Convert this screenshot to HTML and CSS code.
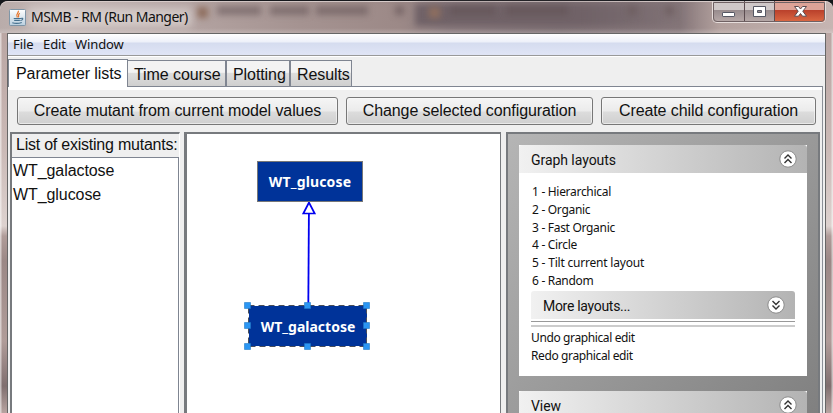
FILE: index.html
```html
<!DOCTYPE html>
<html lang="en">
<head>
<meta charset="utf-8">
<title>MSMB - RM (Run Manger)</title>
<link rel="stylesheet" href="styles.css">
</head>
<body>
<div class="window">
  <header class="titlebar">
    <div class="ghost" aria-hidden="true">
      <i class="ghost-tab"></i>
      <i class="ghost-icon g1"></i><i class="ghost-text g2"></i><i class="ghost-text g2b"></i><i class="ghost-text g2c"></i><i class="ghost-x g3"></i>
      <i class="ghost-icon g4"></i><i class="ghost-text g5"></i><i class="ghost-text g5b"></i><i class="ghost-x g6"></i><i class="ghost-x g7"></i>
      <i class="glow"></i>
    </div>
    <svg class="java" viewBox="0 0 18 18" width="17" height="17">
      <defs><linearGradient id="jg" x2="0" y2="1"><stop offset="0" stop-color="#fff"/><stop offset="1" stop-color="#b9cfdf"/></linearGradient></defs>
      <rect x=".5" y=".5" width="17" height="17" rx="1" fill="url(#jg)" stroke="#7891a4"/>
      <path d="M9.800 1.800C11 4.200 6.300 5 8.800 9M11.500 4.500C8.500 6 11.200 6.800 9.800 8.800" fill="none" stroke="#e8762c" stroke-width="1.300"/>
      <path d="M5 10h7.500M5.500 12h6M3.500 14.500q5 1.500 10-.3M12.500 10q2.500-.6 2 .7t-2.500 1.500" fill="none" stroke="#47718f" stroke-width="1.200"/>
    </svg>
    <h1 class="title">MSMB - RM (Run Manger)</h1>
    <div class="controls">
      <span class="control"><svg width="31" height="20" viewBox="0 0 31 20"><rect x="9.500" y="10.500" width="12" height="4" rx=".6" fill="#fff" stroke="#555763"/></svg></span>
      <span class="control"><svg width="29" height="20" viewBox="0 0 29 20"><path d="M8.500 4.500h12v10h-12zM12.500 8.500h4v2h-4z" fill="#fff" fill-rule="evenodd" stroke="#555763"/></svg></span>
      <span class="control close"><svg width="50" height="20" viewBox="0 0 50 20"><path d="M19.500 4.500h4l2 2.500 2-2.500h4l-3.700 4.700 3.700 5h-4l-2-2.700-2 2.700h-4l3.700-5z" fill="#fff" stroke="#5b4b50"/></svg></span>
    </div>
  </header>
  <main class="client">
    <nav class="menubar"><span class="m1">File</span><span class="m2">Edit</span><span class="m3">Window</span></nav>
    <div class="tabs">
      <span class="tab active">Parameter lists</span><span class="tab tc">Time course</span><span class="tab tp">Plotting</span><span class="tab tr">Results</span>
    </div>
    <div class="page">
      <div class="buttons">
        <button class="btn b1">Create mutant from current model values</button>
        <button class="btn b2">Change selected configuration</button>
        <button class="btn b3">Create child configuration</button>
      </div>
      <div class="panes">
        <section class="mutants">
          <h2>List of existing mutants:</h2>
          <ul><li>WT_galactose</li><li>WT_glucose</li></ul>
        </section>
        <section class="canvas">
          <svg class="edge" width="20" height="106" viewBox="0 0 20 106"><path d="M10.900 13L10.300 106" stroke="#0000f0" stroke-width="1.800"/><path d="M11 1.500L5.300 12.500H16.700Z" fill="#fff" stroke="#0000f0" stroke-width="1.700"/></svg>
          <div class="node glucose"><span>WT_glucose</span></div>
          <div class="node galactose"><span>WT_galactose</span>
            <svg class="selection" width="127" height="49" viewBox="0 0 127 49">
              <rect x="4.500" y="3.500" width="118" height="41" fill="none" stroke="#4a4e58" stroke-dasharray="6 4"/>
              <g fill="#2b96f3" stroke="#217ac6" stroke-width=".6"><path d="M.5.500h6v6h-6zM60.500.500h6v6h-6zM119.500.500h6v6h-6zM.5 20.500h6v6h-6zM119.500 20.500h6v6h-6zM.5 41.500h6v6h-6zM60.500 41.500h6v6h-6zM119.500 41.500h6v6h-6z"/></g>
            </svg>
          </div>
        </section>
        <aside class="sidebar">
          <section class="card">
            <h3 class="head">Graph layouts
              <svg width="18" height="18" viewBox="0 0 18 18"><circle cx="9" cy="9" r="8.200" fill="#fff" stroke="#8b8b8b"/><path d="M5.500 8.500L9 5l3.500 3.500M5.500 13L9 9.500l3.500 3.500" fill="none" stroke="#333" stroke-width="1.400"/></svg></h3>
            <ul class="links"><li>1 - Hierarchical</li><li>2 - Organic</li><li>3 - Fast Organic</li><li>4 - Circle</li><li class="tilt">5 - Tilt current layout</li><li>6 - Random</li></ul>
            <h3 class="head more">More layouts...
              <svg width="18" height="18" viewBox="0 0 18 18"><circle cx="9" cy="9" r="8.200" fill="#fff" stroke="#8b8b8b"/><path d="M5.500 5L9 8.500 12.500 5M5.500 9.500L9 13l3.500-3.500" fill="none" stroke="#333" stroke-width="1.400"/></svg></h3>
            <hr class="rule">
            <ul class="links edits"><li>Undo graphical edit</li><li>Redo graphical edit</li></ul>
          </section>
          <section class="card view">
            <h3 class="head">View
              <svg width="18" height="18" viewBox="0 0 18 18"><circle cx="9" cy="9" r="8.200" fill="#fff" stroke="#8b8b8b"/><path d="M5.500 8.500L9 5l3.500 3.500M5.500 13L9 9.500l3.500 3.500" fill="none" stroke="#333" stroke-width="1.400"/></svg></h3>
          </section>
        </aside>
      </div>
    </div>
  </main>
</div>
</body>
</html>
```
FILE: styles.css
```css
* { box-sizing: border-box; margin: 0; padding: 0; }
body { width: 833px; height: 413px; overflow: hidden; background: #15171b; color: #111; font: 16px "Liberation Sans", Arial, sans-serif; }
svg { display: block; flex: none; }
ul { list-style: none; }
h1, h2, h3 { font-weight: normal; }
.window { position: relative; width: 833px; height: 413px; padding: 0 8px; border-top: 1px solid #15171b; border-radius: 8px 8px 0 0; background: linear-gradient(90deg, #fff8 0 1px, transparent 2px 831px, #fff8 832px), linear-gradient(#b6a29f 0, #c2afac 90px, #cbbab7 150px, #ddd2cf 225px, #b09c99 235px, #9b8886 260px, #b09c99 340px, #806f6f 385px, #b9a5a2 413px); }
.titlebar { position: relative; display: flex; height: 32px; margin: 0 -8px; padding: 6px 0 0 9px; border-top: 1px solid #d7cbc9; border-radius: 8px 8px 0 0; background: linear-gradient(#0000 26px, #fff3), linear-gradient(90deg, #b9acaa 0, #c4b8b6 60px, #b3a3a1 190px, #a59391 300px, #9c8987 400px, #8b7b7e 450px, #7e7074 560px, #86777a 680px, #b3a19e 720px, #c6b5b2 833px); }
.java { position: relative; margin-top: 1px; }
.title { position: relative; margin-left: 5px; font: 14px/18px "Noto Sans", sans-serif; letter-spacing: -.54px; white-space: nowrap; }
.ghost i { position: absolute; filter: blur(3px); }
.ghost .glow { left: 28px; top: 6px; width: 164px; height: 19px; background: #e6dfdd99; filter: blur(5px); }
.ghost-icon { top: 5px; width: 11px; height: 11px; background: #8f6f5f; }
.ghost-text { top: 4px; height: 9px; background: #5f505388; }
.ghost-x { top: 4px; width: 9px; height: 9px; background: #6c5c5dbb; }
.ghost .ghost-tab { left: 415px; top: 2px; width: 280px; height: 22px; background: linear-gradient(90deg, #706267, #706267 60%, #70626700); }
.g1 { left: 197px; } .g2 { left: 217px; width: 44px; } .g2b { left: 270px; width: 39px; } .g2c { left: 316px; width: 52px; } .g3 { left: 395px; }
.g4 { left: 429px; } .g5 { left: 450px; width: 45px; } .g5b { left: 506px; width: 62px; } .g6 { left: 628px; } .g7 { left: 665px; }
.controls { position: absolute; right: 7px; top: -1px; display: flex; height: 22px; border: 1px solid #e6dddb; border-top: 0; border-radius: 0 0 5px 5px; overflow: hidden; outline: 1px solid #6f6163; outline-offset: -2px; }
.control { padding-top: 1px; background: linear-gradient(#cfc8c8 0 9px, #978b8d 9px, #b8aaa9); border-right: 1px solid #5b4c50; }
.close { background: linear-gradient(#dda397 0 9px, #b9402b 9px, #dc6a44); border-right: 0; }
.client { position: relative; width: 819px; height: 380px; margin-left: -1px; border: 1px solid #666; border-bottom: 0; background: #efefef; }
.menubar { display: flex; height: 22px; padding: 0 0 0 5px; background: linear-gradient(#fff 0, #edf0f9 8px, #d5dcef 9px, #dfe4f5 20px); border-bottom: 1px solid #999; font: 13px/20px "Noto Sans", sans-serif; letter-spacing: -.1px; }
.m1 { width: 30px; } .m2 { width: 32px; }
.tabs { display: flex; align-items: flex-end; height: 30px; padding-top: 2px; border-top: 1px solid #fff; }
.tab { height: 26px; border: 1px solid #7f8591; border-bottom: 0; background: linear-gradient(#f3f3f3 0 45%, #ddd 50%, #cfcfcf); line-height: 27px; white-space: nowrap; padding-left: 6px; letter-spacing: -.08px; }
.active { position: relative; width: 120px; height: 28px; margin-bottom: -1px; padding-left: 7px; background: #fff; line-height: 28px; }
.tc { width: 98px; border-left: 0; } .tp { width: 64px; } .tr { width: 62px; }
.page { width: 815px; height: 327px; border-top: 1px solid #7f8591; border-right: 1px solid #8b9097; box-shadow: inset 0 3px #fff; padding-top: 10px; }
.buttons { display: flex; gap: 8px; padding-left: 9px; height: 28px; }
.btn { height: 28px; font: inherit; letter-spacing: -.09px; color: #111; border: 1px solid #777; border-radius: 3px; background: linear-gradient(#f5f5f5 0, #ebebeb 13px, #dcdcdc 14px, #cfcfcf); box-shadow: inset 0 0 0 1px #fafafa99; white-space: nowrap; }
.b1 { width: 321px; } .b2 { width: 247px; } .b3 { width: 215px; }
.panes { display: flex; margin-top: 7px; height: 281px; padding-left: 2px; overflow: hidden; }
.mutants { width: 170px; border: 2px solid #777a7e; border-right: 1px solid #fff; border-bottom: 0; }
.mutants h2 { height: 24px; padding-left: 4px; font-size: 16px; line-height: 21px; letter-spacing: -.23px; border-bottom: 1px solid #7f8591; white-space: nowrap; }
.mutants ul { height: 255px; background: #fff; border-right: 1px solid #7f8591; padding: 1px 0 0 1px; line-height: 23.500px; letter-spacing: -.08px; }
.canvas { position: relative; width: 317px; margin-left: 4px; border: 3px solid #777a7e; border-width: 2px 1px 0 3px; background: #fff; }
.node { position: absolute; display: flex; align-items: center; justify-content: center; background: #003399; color: #fff; font: bold 14px "Noto Sans", sans-serif; }
.glucose { left: 70px; top: 27px; width: 106px; height: 41px; border: 1px solid #777; letter-spacing: .15px; }
.galactose { left: 62px; top: 172px; width: 118px; height: 40px; }
.selection { position: absolute; left: -5px; top: -4px; }
.edge { position: absolute; left: 111px; top: 67px; }
.sidebar { flex: 1; margin-left: 5px; margin-right: 2px; padding: 11px 11px 0; border: 2px solid #777a7e; border-bottom: 0; background: linear-gradient(135deg, #b5b5b5, #808080); }
.card { height: 231px; background: #fff; }
.head { display: flex; justify-content: space-between; height: 28px; padding: 5px 10px 0 12px; border-radius: 3px 3px 0 0; background: linear-gradient(90deg, #f1f1f1, #b3b3b3); font: 14px/20px Roboto, sans-serif; letter-spacing: -.05px; }
.links { padding: 10px 0 0 13px; font: 12px/17.800px "Noto Sans", sans-serif; white-space: nowrap; letter-spacing: -.3px; }
.tilt { letter-spacing: -.2px; }
.more { margin: 1px 12px 0; letter-spacing: -.3px; }
.rule { margin: 2px 12px 0; height: 6px; border: solid #999; border-width: 1px 0 2px; border-bottom-color: #ccc; }
.edits { padding-top: 2px; padding-left: 12px; letter-spacing: -.38px; }
.view { height: 22px; margin-top: 15px; }
.view .head { height: 22px; }
```
